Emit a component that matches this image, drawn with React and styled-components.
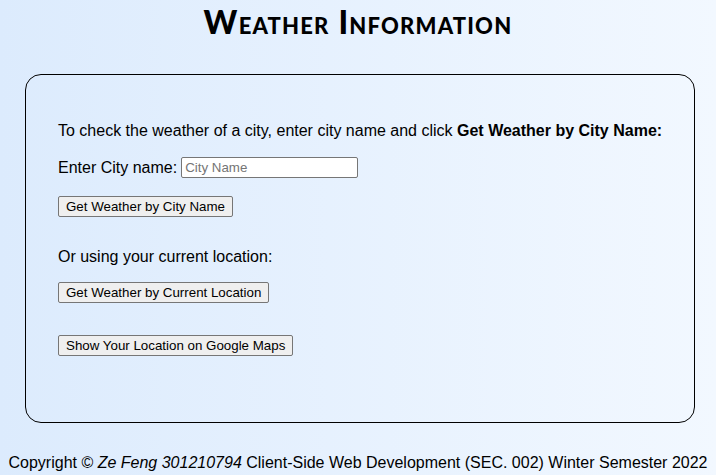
import React from "react";
import styled, { createGlobalStyle } from "styled-components";

const GlobalStyle = createGlobalStyle`
  html, body {
    margin: 0;
    padding: 0;
  }
  body {
    min-height: 475px;
    background: linear-gradient(to right, #dcebfd, #f2f8ff);
    font-family: "Liberation Sans", Arial, sans-serif;
    color: #000;
  }
`;

const Page = styled.div`
  display: flex;
  flex-direction: column;
  align-items: stretch;
`;

const Title = styled.h1`
  margin: 0;
  padding-top: 3px;
  height: 41px;
  line-height: 38px;
  text-align: center;
  font-family: "Lato", "DejaVu Sans", sans-serif;
  font-weight: 900;
  font-size: 32px;
  font-variant: small-caps;
  letter-spacing: 1.2px;
`;

const Card = styled.section`
  margin: 30px 21px 0 25px;
  border: 1px solid #000;
  border-radius: 16px;
  padding: 47px 20px 66px 32px;
  display: flex;
  flex-direction: column;
  align-items: flex-start;
  font-size: 16px;
`;

const Line = styled.div`
  display: flex;
  align-items: center;
  gap: 4px;
  white-space: nowrap;
  line-height: 18px;
  margin-top: ${(p) => p.$top || 0}px;
`;

const CityInput = styled.input`
  box-sizing: border-box;
  width: 177px;
  height: 21px;
  padding: 1px 3px;
  border: 1px solid #767676;
  border-radius: 2px;
  background: #fff;
  font-family: "Liberation Sans", Arial, sans-serif;
  font-size: 13.33px;
  &::placeholder {
    color: #757575;
  }
`;

const Button = styled.button`
  box-sizing: border-box;
  height: 21px;
  margin-top: ${(p) => p.$top || 0}px;
  padding: 1px 7px;
  border: 1px solid #767676;
  border-radius: 2px;
  background: #efefef;
  color: #000;
  font-family: "Liberation Sans", Arial, sans-serif;
  font-size: 13.33px;
  line-height: 17px;
  white-space: nowrap;
  cursor: pointer;
`;

const Footer = styled.footer`
  margin-top: 31px;
  text-align: center;
  white-space: nowrap;
  font-size: 16px;
  line-height: 18px;
`;

export default function App() {
  return (
    <Page>
      <GlobalStyle />
      <Title>Weather Information</Title>
      <Card>
        <Line>
          <span>
            To check the weather of a city, enter city name and click{" "}
            <b>Get Weather by City Name:</b>
          </span>
        </Line>
        <Line $top={17}>
          <label htmlFor="city">Enter City name:</label>
          <CityInput id="city" type="text" placeholder="City Name" />
        </Line>
        <Button $top={18}>Get Weather by City Name</Button>
        <Line $top={31}>Or using your current location:</Line>
        <Button $top={16}>Get Weather by Current Location</Button>
        <Button $top={32}>Show Your Location on Google Maps</Button>
      </Card>
      <Footer>
        Copyright © <i>Ze Feng 301210794</i> Client-Side Web Development (SEC.
        002) Winter Semester 2022
      </Footer>
    </Page>
  );
}
